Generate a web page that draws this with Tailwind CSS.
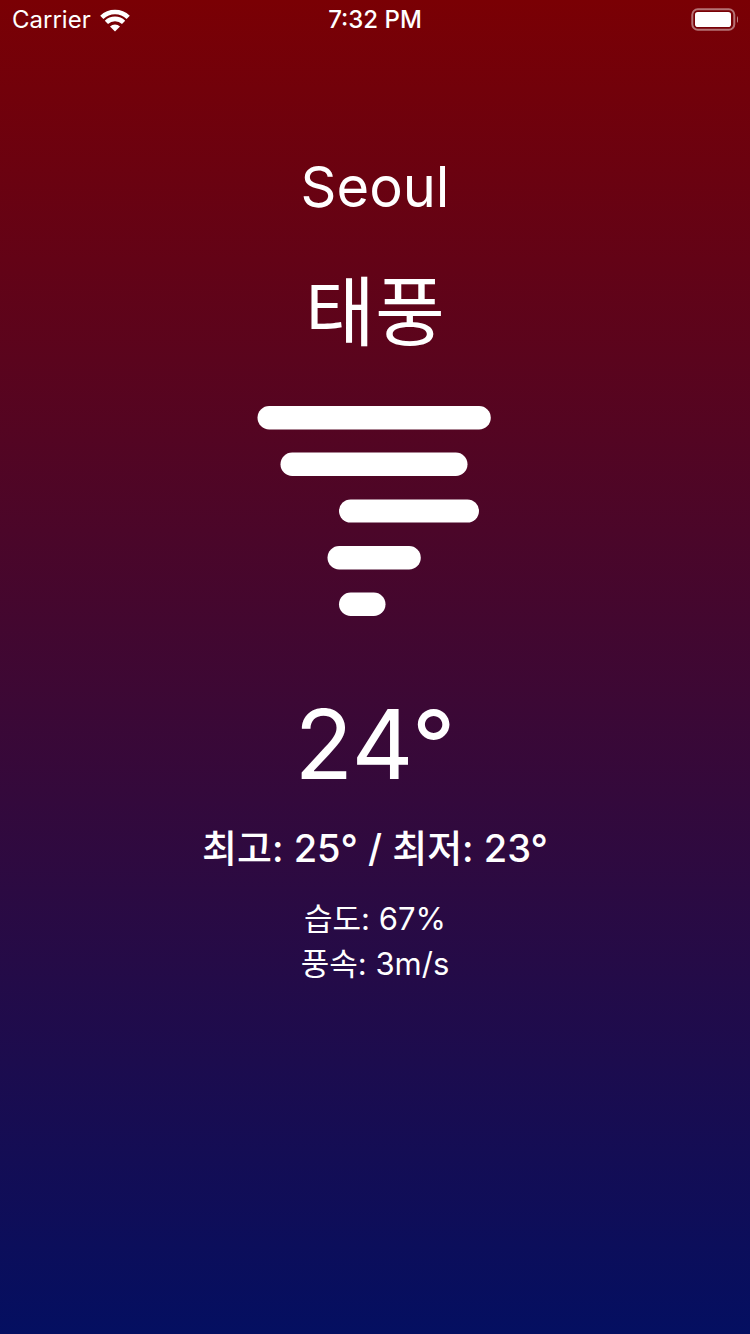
<!DOCTYPE html>
<html lang="ko">
<head>
<meta charset="utf-8">
<meta name="viewport" content="width=device-width, initial-scale=1">
<title>Seoul</title>
<script src="https://cdn.jsdelivr.net/npm/@tailwindcss/browser@4"></script>
</head>
<body class="min-h-screen bg-linear-to-b/srgb from-[#7a0004] to-[#040f61] text-white font-[Inter,'Noto_Sans_CJK_KR',sans-serif]">
<header class="grid grid-cols-3 items-center h-10 px-3 text-2xl leading-10">
  <div class="flex items-center gap-2">
    <span>Carrier</span>
    <svg class="w-8 h-6" viewBox="0 0 32 24" fill="none" stroke="#fff" stroke-width="4.600"><path d="M2.800 9.300a19 19 0 0 1 26.400 0M7.400 14.400a12.300 12.300 0 0 1 17.200 0"/><path d="M16 23.500l-5-5a7.200 7.200 0 0 1 10 0z" fill="#fff" stroke="none"/></svg>
  </div>
  <time class="text-center font-medium">7:32 PM</time>
  <svg class="justify-self-end w-12 h-6" viewBox="0 0 48 24"><rect x="2.300" y="1.300" width="42" height="20.400" rx="5.500" fill="none" stroke="#fff" stroke-opacity=".45" stroke-width="2"/><rect x="5" y="4" width="36" height="15" rx="2.800" fill="#fff"/><path d="M47 8q3 3.500 0 7z" fill="#fff" fill-opacity=".5"/></svg>
</header>
<main class="flex flex-col items-center pt-28">
  <h1 class="text-[56px] leading-[70px]">Seoul</h1>
  <p class="mt-10 text-[76px] leading-[100px]">태풍</p>
  <svg class="mt-11 w-[234px] h-[210px] overflow-visible" viewBox="0 0 234 210" fill="#fff"><rect x="-.5" width="233.300" height="23.400" rx="11.700"/><rect x="22.500" y="46.500" width="187" height="23.400" rx="11.700"/><rect x="81" y="93.400" width="140" height="23.200" rx="11.600"/><rect x="69.500" y="140" width="93.300" height="23.400" rx="11.700"/><rect x="81" y="186.500" width="46.500" height="23.400" rx="11.700"/></svg>
  <p class="mt-17 text-[96px] leading-[120px]">24°</p>
  <p class="mt-5 text-[38px] leading-[48px] font-medium">최고: 25° / 최저: 23°</p>
  <div class="mt-6 text-[31px] leading-[45px] text-center">
    <p>습도: 67%</p>
    <p>풍속: 3m/s</p>
  </div>
</main>
</body>
</html>
